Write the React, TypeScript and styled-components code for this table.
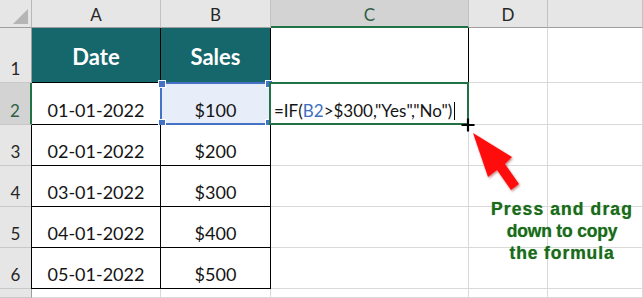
import { Fragment } from 'react';
import styled, { createGlobalStyle } from 'styled-components';

const GlobalStyle = createGlobalStyle`
  html, body {
    margin: 0;
    padding: 0;
    background: #fff;
    overflow: hidden;
  }
`;

const GREEN = '#217346';
const TEAL = '#15676b';

const Sheet = styled.div`
  position: relative;
  display: grid;
  grid-template-columns: 32px 129px 110px 198px 79px 1fr;
  grid-template-rows: 28px 55px 42px 41px 41px 41px 41px 1fr;
  width: 643px;
  height: 298px;
  background: #fff;
  font-family: Lato, "Open Sans", sans-serif;
  overflow: hidden;
`;

const Corner = styled.div`
  display: flex;
  justify-content: flex-end;
  align-items: flex-end;
  padding: 0 3px 3px 0;
  background: #e6e6e6;
  border-right: 1px solid #b8b8b8;
  border-bottom: 1px solid #9e9e9e;
  box-sizing: border-box;
`;

const CornerMark = styled.div`
  width: 15px;
  height: 15px;
  background: #b5b5b5;
  clip-path: polygon(100% 0, 100% 100%, 0 100%);
`;

const ColHead = styled.div<{ $active?: boolean }>`
  display: flex;
  justify-content: center;
  align-items: center;
  padding-top: 2px;
  box-sizing: border-box;
  background: ${p => (p.$active ? '#d3d3d3' : '#e6e6e6')};
  border-right: 1px solid #c2c2c2;
  border-bottom: ${p => (p.$active ? `2px solid ${GREEN}` : '1px solid #9e9e9e')};
  color: ${p => (p.$active ? '#2f5f44' : '#262626')};
  font-size: 17px;
`;

const RowHead = styled.div<{ $active?: boolean }>`
  display: flex;
  justify-content: center;
  align-items: flex-end;
  padding-bottom: 3px;
  box-sizing: border-box;
  background: ${p => (p.$active ? '#d3d3d3' : '#e6e6e6')};
  border-right: ${p => (p.$active ? `2px solid ${GREEN}` : '1px solid #9e9e9e')};
  border-bottom: 1px solid #c8c8c8;
  color: ${p => (p.$active ? '#2f5f44' : '#262626')};
  font-size: 17px;
`;

const Cell = styled.div<{
  $head?: boolean;
  $boxed?: boolean;
  $first?: boolean;
  $darkRight?: boolean;
  $picked?: boolean;
  $left?: boolean;
}>`
  position: relative;
  display: flex;
  justify-content: ${p => (p.$left ? 'flex-start' : 'center')};
  align-items: ${p => (p.$head ? 'center' : 'flex-end')};
  padding: ${p => (p.$head ? '2px 0 0' : p.$left ? '0 0 3px 3px' : '0 0 3px')};
  box-sizing: border-box;
  white-space: nowrap;
  background: ${p => (p.$head ? TEAL : p.$picked ? '#e8eef9' : '#fff')};
  color: ${p => (p.$head ? '#fff' : '#141414')};
  font-size: ${p => (p.$head ? '22px' : '18px')};
  font-weight: ${p => (p.$head ? 700 : 400)};
  border-right: 1px solid ${p => (p.$boxed || p.$darkRight ? '#000' : '#d9d9d9')};
  border-bottom: 1px solid ${p => (p.$boxed ? '#000' : '#d9d9d9')};
  box-shadow: ${p => (p.$first ? '-1px 0 0 #000' : 'none')};
`;

const Formula = styled.span`
  font-size: 17px;
  color: #141414;
`;

const Ref = styled.span`
  color: #3f6fbf;
`;

const Caret = styled.span`
  display: inline-block;
  width: 1px;
  height: 18px;
  margin-left: 2px;
  background: #000;
  vertical-align: -3px;
`;

const BlueFrame = styled.div`
  position: absolute;
  top: -1px;
  left: -1px;
  right: -1px;
  bottom: -1px;
  border: 2px solid #4472c4;
  pointer-events: none;
`;

const Knob = styled.div<{ $x: 'left' | 'right'; $y: 'top' | 'bottom' }>`
  position: absolute;
  ${p => p.$x}: -4px;
  ${p => p.$y}: -4px;
  width: 6px;
  height: 6px;
  background: #4472c4;
  border: 1px solid #fff;
`;

const GreenFrame = styled.div`
  position: absolute;
  top: -1px;
  left: -2px;
  right: -1px;
  bottom: -1px;
  border: 2px solid ${GREEN};
  pointer-events: none;
`;

const FillCursor = styled.svg`
  position: absolute;
  right: -8px;
  bottom: -9px;
  z-index: 3;
`;

const Arrow = styled.svg`
  position: absolute;
  left: 466px;
  top: 126px;
  z-index: 2;
  overflow: visible;
`;

const Note = styled.div`
  position: absolute;
  left: 482px;
  top: 198px;
  width: 160px;
  display: flex;
  flex-direction: column;
  align-items: center;
  font-family: "Liberation Sans", Arial, sans-serif;
  font-weight: 700;
  font-size: 17.5px;
  line-height: 22px;
  color: #1b6a1b;
  text-shadow: 0 0 1px #6fa86f;
  z-index: 2;
`;

const NoteLine = styled.span<{ $spread: number }>`
  letter-spacing: ${p => p.$spread}px;
`;

const rows = [
  { n: 3, date: '02-01-2022', sales: '$200' },
  { n: 4, date: '03-01-2022', sales: '$300' },
  { n: 5, date: '04-01-2022', sales: '$400' },
  { n: 6, date: '05-01-2022', sales: '$500' },
];

const App = () => {
  return (
    <>
      <GlobalStyle />
      <Sheet>
        <Corner>
          <CornerMark />
        </Corner>
        <ColHead>A</ColHead>
        <ColHead>B</ColHead>
        <ColHead $active>C</ColHead>
        <ColHead>D</ColHead>
        <ColHead />

        <RowHead>1</RowHead>
        <Cell $head $boxed>Date</Cell>
        <Cell $head $boxed>Sales</Cell>
        <Cell $darkRight />
        <Cell />
        <Cell />

        <RowHead $active>2</RowHead>
        <Cell $boxed>01-01-2022</Cell>
        <Cell $boxed $picked>
          $100
          <BlueFrame>
            <Knob $x="left" $y="top" />
            <Knob $x="right" $y="top" />
            <Knob $x="left" $y="bottom" />
            <Knob $x="right" $y="bottom" />
          </BlueFrame>
        </Cell>
        <Cell $left $darkRight>
          <Formula>
            =IF(<Ref>B2</Ref>&gt;$300,"Yes","No")<Caret />
          </Formula>
          <GreenFrame />
          <FillCursor width="16" height="16" viewBox="0 0 16 16">
            <path d="M8 1.5v13M1.5 8h13" stroke="#000" strokeWidth="2.2" />
          </FillCursor>
        </Cell>
        <Cell />
        <Cell />

        {rows.map(r => (
          <Fragment key={r.n}>
            <RowHead>{r.n}</RowHead>
            <Cell $boxed $first>{r.date}</Cell>
            <Cell $boxed>{r.sales}</Cell>
            <Cell />
            <Cell />
            <Cell />
          </Fragment>
        ))}

        <RowHead />
        <Cell />
        <Cell />
        <Cell />
        <Cell />
        <Cell />

        <Arrow width="60" height="70" viewBox="0 0 60 70">
          <defs>
            <filter id="arrowShade" x="-20%" y="-20%" width="150%" height="150%">
              <feDropShadow dx="1" dy="1.5" stdDeviation="1" floodColor="#7a0000" floodOpacity="0.45" />
            </filter>
          </defs>
          <polygon
            points="7,7 46,31 39,38 53,58 45,64 31,44 22,51"
            fill="#ff1010"
            filter="url(#arrowShade)"
          />
        </Arrow>

        <Note>
          <NoteLine $spread={1.1}>Press and drag</NoteLine>
          <NoteLine $spread={-0.2}>down to copy</NoteLine>
          <NoteLine $spread={0.9}>the formula</NoteLine>
        </Note>
      </Sheet>
    </>
  );
};

export default App;
